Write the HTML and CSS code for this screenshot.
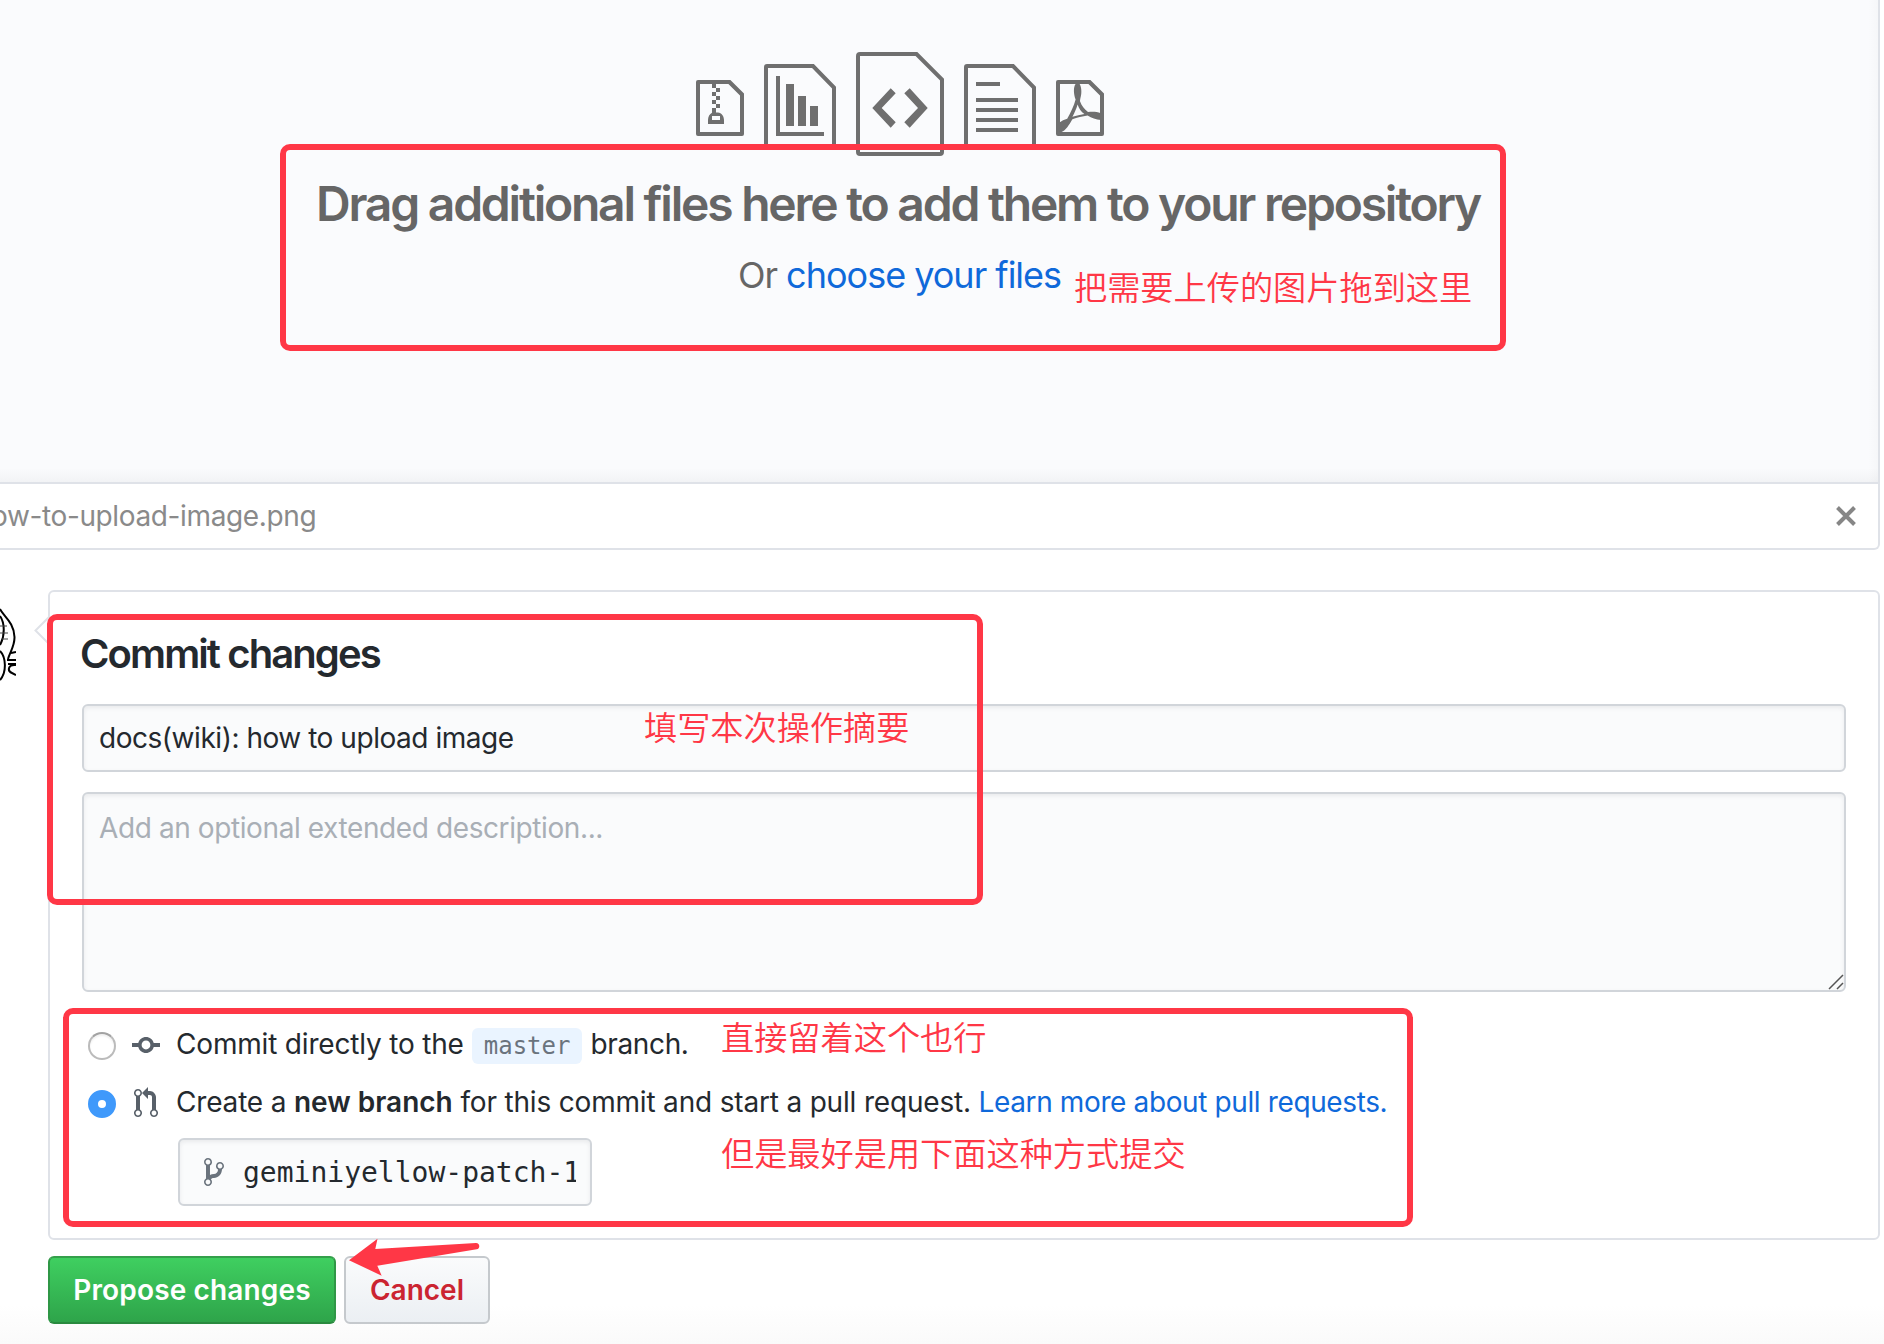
FILE: index.html
```html
<!DOCTYPE html>
<html lang="en">
<head>
<meta charset="utf-8">
<title>Upload files</title>
<link rel="stylesheet" href="styles.css">
</head>
<body>
<main class="page">
  <section class="uploader">
    <div class="dropzone">
      <div class="file-icons">
        <svg class="ic-small" viewBox="0 0 12 14"><path fill-rule="evenodd" d="M8.6 0H.5a.5.5 0 0 0-.5.5v13a.5.5 0 0 0 .5.5h11a.5.5 0 0 0 .5-.5V3.4L8.6 0zM11 13H1V1h3v1h1V1h3.1L11 3.9V13zM5 2h1v1H5zM4 3h1v1H4zM5 4h1v1H5zM4 5h1v1H4zM5 6h1v1H5zM4 7h1v1.1h.5C6.4 8.2 7 9 7 10v1H3v-1c0-.8.4-1.500 1-1.800zM4 9v1h2V9z"/></svg>
        <svg class="ic-medium" viewBox="0 0 72 84"><path class="outline" d="M3 2H49L70 23.500V81a1 1 0 0 1-1 1H3a1 1 0 0 1-1-1V3a1 1 0 0 1 1-1z"/><path d="M12 12h4v56h44v4H12zM22 20h8v42h-8zM34 32h8v30h-8zM46 42h8v20h-8z"/></svg>
        <svg class="ic-large" viewBox="0 0 88 104"><path class="outline" d="M4 2H60.500L86 27.500V100a2 2 0 0 1-2 2H4a2 2 0 0 1-2-2V4a2 2 0 0 1 2-2z"/><path d="M34.700 36.300l5 5L25.700 56l14 14.300-5 5.400L16.300 56zM53.700 36.300l-5.400 5L62 56 48.300 70.300l5.400 5.400L71.700 56z"/></svg>
        <svg class="ic-medium" viewBox="0 0 72 84"><path class="outline" d="M3 2H49L70 23.500V81a1 1 0 0 1-1 1H3a1 1 0 0 1-1-1V3a1 1 0 0 1 1-1z"/><path d="M12 18h24v4H12zM12 34h42v4H12zM12 44h42v4H12zM12 54h42v4H12zM12 64h42v4H12z"/></svg>
        <svg class="ic-small" viewBox="0 0 12 14"><path fill-rule="evenodd" d="M8.600 0H.5a.5.5 0 0 0-.5.5v13a.5.5 0 0 0 .5.5h11a.5.5 0 0 0 .5-.5V3.400zM1 1h7.100L11 3.900V13H1z"/><path fill-rule="evenodd" d="M4.900 1h1C6.300 1.500 6.500 3 6.200 4.100c-.1.500-.2.800-.2 1.200.4 1.100 1.100 2 2 2.700 1.100-.1 2.200-.1 3.200.3v1.700c-1.200-.1-2.300-.500-3.300-1.100-1.300.2-2.600.5-3.800.9C3.300 11.200 2.400 12.600 1.400 13H.8v-2.300c.600-.5 1.300-.8 2-1C3.700 8.100 4.500 6.500 4.900 4.900 4.400 3.500 4.300 1.800 4.900 1zM5.400 6.100C5.100 7.200 4.600 8.200 4.100 9.200c1-.3 2-.5 3-.7C6.300 7.900 5.700 7.100 5.400 6.100z"/></svg>
      </div>
      <h1 class="drop-title">Drag additional files here to add them to your repository</h1>
      <p class="drop-sub">Or <a>choose your files</a></p>
    </div>
    <div class="file-row">
      <span class="file-name">ow-to-upload-image.png</span>
      <svg class="close" viewBox="0 0 20 20"><path d="M1.500 1.500l17 17M18.500 1.500l-17 17"/></svg>
    </div>
  </section>

  <section class="commit">
    <div class="avatar">
      <svg viewBox="0 0 16 92"><g fill="none" stroke="#000" stroke-width="2"><path d="M0 19C3 26 14 32 14.500 47C14.800 56 10 62 8 69"/><path d="M0 26C5 33 5 46 0 55"/><path d="M0 61C6 67 7 82 0 90"/><path d="M7 70h9M8 74h8M11 63l5-1M16 75c-8-1-9 6-4 8l4 2"/></g><path fill="none" stroke="#444" d="M0 36h7M0 43h8M2 49h6"/></svg>
    </div>
    <div class="card">
      <svg class="tail" viewBox="0 0 16 28"><path d="M15 1L1.500 14.500 15 28"/></svg>
      <h2 class="card-title">Commit changes</h2>
      <input class="field summary" type="text" value="docs(wiki): how to upload image">
      <div class="desc">
        <textarea class="field" placeholder="Add an optional extended description..."></textarea>
        <svg class="grip" viewBox="0 0 16 16"><path d="M1 15L15 1M9 15l6-6"/></svg>
      </div>
      <div class="choice">
        <span class="radio"></span>
        <svg class="oct" viewBox="0 0 14 16"><path d="M10.860 7c-.45-1.720-2-3-3.860-3-1.860 0-3.410 1.280-3.860 3H0v2h3.140c.45 1.720 2 3 3.860 3 1.860 0 3.410-1.280 3.860-3H14V7h-3.140zM7 10.200c-1.220 0-2.200-.98-2.200-2.200 0-1.220.98-2.200 2.200-2.200 1.220 0 2.200.98 2.200 2.200 0 1.220-.98 2.200-2.200 2.200z"/></svg>
        <span class="label">Commit directly to the</span>
        <code class="ref">master</code>
        <span class="label tight">branch.</span>
      </div>
      <div class="choice second">
        <span class="radio on"></span>
        <svg class="oct pr" viewBox="0 0 12 16"><path d="M11 11.280V5c-.03-.78-.34-1.470-.94-2.060C9.460 2.350 8.780 2.030 8 2H7V0L4 3l3 3V4h1c.27.020.48.110.69.310.21.200.300.420.310.690v6.280A1.993 1.993 0 0 0 10 15a1.993 1.993 0 0 0 1-3.720zm-1 2.920c-.66 0-1.200-.55-1.200-1.200 0-.65.55-1.200 1.200-1.200.65 0 1.200.55 1.200 1.200 0 .65-.55 1.200-1.200 1.200zM4 3c0-1.110-.89-2-2-2a1.993 1.993 0 0 0-1 3.720v6.560A1.993 1.993 0 0 0 2 15a1.993 1.993 0 0 0 1-3.720V4.720c.59-.34 1-.98 1-1.720zm-.8 10c0 .66-.55 1.200-1.200 1.200-.65 0-1.200-.55-1.200-1.200 0-.65.55-1.200 1.200-1.200.65 0 1.200.55 1.200 1.200zM2 4.200C1.340 4.200.8 3.650.8 3c0-.65.55-1.200 1.200-1.200.65 0 1.200.55 1.200 1.200 0 .65-.55 1.200-1.200 1.200z"/></svg>
        <span class="label">Create a <b>new branch</b> for this commit and start a pull request. <a>Learn more about pull requests.</a></span>
      </div>
      <div class="branch-field">
        <svg class="oct fork" viewBox="0 0 10 16"><path d="M10 5c0-1.110-.89-2-2-2a1.993 1.993 0 0 0-1 3.720v.3c-.02.52-.23.98-.63 1.380-.4.400-.860.610-1.380.630-.83.020-1.480.160-2 .450V4.720a1.993 1.993 0 0 0-1-3.720C.88 1 0 1.890 0 3a2 2 0 0 0 1 1.720v6.560c-.59.350-1 .990-1 1.720 0 1.110.89 2 2 2 1.110 0 2-.89 2-2 0-.53-.2-1-.53-1.360.09-.06.48-.41.590-.470.250-.110.560-.170.940-.170 1.050-.05 1.950-.45 2.750-1.250S8.950 7.770 9 6.730h-.02C9.590 6.370 10 5.730 10 5zM2 1.800c.66 0 1.200.55 1.200 1.200 0 .65-.55 1.200-1.200 1.200C1.350 4.200.8 3.650.8 3c0-.65.55-1.200 1.200-1.200zm0 12.410c-.66 0-1.200-.55-1.200-1.200 0-.65.55-1.200 1.200-1.200.65 0 1.200.55 1.200 1.200 0 .65-.55 1.200-1.200 1.200zm6-8c-.66 0-1.200-.55-1.200-1.200 0-.65.55-1.200 1.200-1.200.65 0 1.200.55 1.200 1.200 0 .65-.55 1.200-1.200 1.200z"/></svg>
        <span class="branch-name">geminiyellow-patch-1</span>
      </div>
    </div>
  </section>

  <div class="actions">
    <button class="btn primary">Propose changes</button>
    <button class="btn danger">Cancel</button>
  </div>

  <div class="mark box-drop"></div>
  <div class="mark box-summary"></div>
  <div class="mark box-branch"></div>
  <span class="note note-drop">把需要上传的图片拖到这里</span>
  <span class="note note-summary">填写本次操作摘要</span>
  <span class="note note-direct">直接留着这个也行</span>
  <span class="note note-branch">但是最好是用下面这种方式提交</span>
  <svg class="arrow" viewBox="0 0 132 38"><path d="M0 22.300L28.500.7 26.300 11 127 5c4 0 4.500 5.500.7 6.300L28.300 27.700l4.400 10z"/></svg>
</main>
</body>
</html>
```
FILE: styles.css
```css
* { box-sizing: border-box; }
body {
  margin: 0;
  background: #fff;
  color: #24292e;
  font: 28px/42px Inter, "Noto Sans", sans-serif;
}
a { color: #0f69da; }
h1, h2, p { margin: 0; }
svg { display: block; flex: none; }

.page {
  position: relative;
  width: 1884px;
  height: 1344px;
  overflow: hidden;
  background: linear-gradient(#fff 1305px, #fafafa 1344px);
}
.uploader {
  width: 1880px;
  height: 550px;
  border: solid #dfe2e8;
  border-width: 0 2px 2px 0;
  border-radius: 0 0 6px 0;
}
.dropzone {
  height: 484px;
  padding: 52px 78px 0 0;
  border-bottom: 2px solid #dfe2e8;
  background:
    linear-gradient(to top, rgba(27, 31, 35, .035), transparent 14px),
    linear-gradient(to left, rgba(27, 31, 35, .02), transparent 10px),
    #fafbfd;
  text-align: center;
}
.file-icons {
  display: flex;
  align-items: center;
  justify-content: center;
  gap: 20px;
  height: 112px;
  padding: 0 0 8px;
}
.file-icons svg { fill: #6f6f6f; }
.file-icons .outline { fill: none; stroke: #6f6f6f; stroke-width: 4; }
.ic-small { width: 48px; height: 56px; margin-top: 8px; }
.ic-medium { width: 72px; height: 84px; margin-top: 4px; }
.ic-large { width: 88px; height: 104px; }
.drop-title {
  margin: 10px 4px 0 0;
  color: #666;
  font-size: 48px;
  line-height: 60px;
  font-weight: 600;
  letter-spacing: -2.23px;
  white-space: nowrap;
}
.drop-sub {
  margin: 14px 1px 0 0;
  color: #666;
  font-size: 36px;
  line-height: 54px;
  letter-spacing: -1px;
}
.file-row {
  display: flex;
  align-items: center;
  justify-content: space-between;
  height: 64px;
  padding: 0 22px 0 0;
}
.file-name { margin-left: -9px; color: #8a8a8a; letter-spacing: -.37px; }
.close { width: 20px; height: 20px; fill: none; stroke: #868686; stroke-width: 4; }

.commit { display: flex; margin-top: 40px; }
.avatar { width: 16px; height: 92px; margin-right: 32px; }
.avatar svg { width: 16px; height: 92px; }
.card {
  position: relative;
  width: 1832px;
  height: 650px;
  padding: 38px 32px 0;
  border: 2px solid #dfe2e8;
  border-radius: 6px;
}
.tail {
  position: absolute;
  left: -16px;
  top: 24px;
  width: 16px;
  height: 28px;
  fill: #fff;
  stroke: #dfe2e8;
  stroke-width: 2;
}
.card-title {
  margin-left: -2px;
  font-size: 40px;
  line-height: 48px;
  font-weight: 600;
  letter-spacing: -1.9px;
}
.field {
  display: block;
  width: 1764px;
  padding: 0 15px;
  border: 2px solid #d1d5da;
  border-radius: 6px;
  background: #fafbfc;
  box-shadow: inset 0 2px 4px rgba(27, 31, 35, .075);
  color: #24292e;
  font: inherit;
  letter-spacing: -.46px;
  outline: none;
}
.summary { height: 68px; margin-top: 26px; }
.desc { position: relative; margin-top: 20px; }
.desc .field { height: 200px; padding-top: 13px; letter-spacing: -.4px; resize: none; }
.field::placeholder { color: #a9afb6; opacity: 1; }
.grip {
  position: absolute;
  right: 2px;
  bottom: 2px;
  width: 16px;
  height: 16px;
  stroke: #555;
  stroke-width: 1.5;
}
.choice {
  display: flex;
  align-items: center;
  height: 42px;
  margin-top: 32px;
  padding-left: 6px;
  white-space: nowrap;
}
.choice.second { margin-top: 16px; }
.radio {
  width: 28px;
  height: 28px;
  margin: 2px 16px 0 0;
  border: 2px solid #bbb;
  border-top-color: #a2a2a2;
  border-radius: 50%;
  box-shadow: inset 0 2px 2px rgba(0, 0, 0, .06);
}
.radio.on {
  border: 10px solid #3f99fb;
  background: #fff;
  box-shadow: none;
}
.oct { width: 28px; height: 32px; fill: #586069; }
.label { margin: -2px 0 0 16px; letter-spacing: -.18px; }
.label.tight { margin-left: 0; letter-spacing: -.35px; }
.label b { font-weight: 600; letter-spacing: 0; }
.label a { letter-spacing: -.38px; }
.ref {
  margin: 2px 8px 0 8px;
  padding: 0 12px;
  border-radius: 6px;
  background: #eaf4ff;
  color: #6a737d;
  font: 24px/36px "DejaVu Sans Mono", monospace;
}
.pr { width: 24px; margin: 0 2px; }
.branch-field {
  display: flex;
  align-items: center;
  width: 414px;
  height: 68px;
  margin: 14px 0 0 96px;
  padding: 0 14px 0 24px;
  border: 2px solid #d1d5da;
  border-radius: 6px;
  background: #fafbfc;
  box-shadow: inset 0 2px 4px rgba(27, 31, 35, .075);
}
.fork { width: 20px; margin-right: 19px; fill: #6a737d; }
.branch-name {
  flex: 1;
  overflow: hidden;
  padding-top: 1px;
  font-family: "DejaVu Sans Mono", monospace;
  white-space: nowrap;
}
.actions { display: flex; gap: 8px; margin: 16px 0 0 48px; }
.btn {
  height: 68px;
  padding: 0;
  border: 2px solid #c5c9cd;
  border-radius: 6px;
  font: 600 28px/42px Inter, "Noto Sans", sans-serif;
}
.primary {
  width: 288px;
  border-color: #34a04b #2f9746 #2a8a3f;
  background: linear-gradient(#3fcf60, #2ea44a);
  color: #fff;
  letter-spacing: .15px;
}
.danger {
  width: 146px;
  background: linear-gradient(#fafbfc, #ebeff3);
  color: #cb2431;
}

/* Annotations drawn over the form */
.mark { position: absolute; border: 6px solid #ff3746; border-radius: 10px; }
.box-drop { left: 280px; top: 144px; width: 1226px; height: 207px; }
.box-summary { left: 47px; top: 614px; width: 936px; height: 291px; }
.box-branch { left: 63px; top: 1008px; width: 1350px; height: 219px; }
.note {
  position: absolute;
  color: #ff3746;
  font: 350 33.2px/40px "Noto Sans CJK SC", sans-serif;
  white-space: nowrap;
}
.note-drop { left: 1074px; top: 266px; }
.note-summary { left: 644px; top: 706px; }
.note-direct { left: 721px; top: 1016px; }
.note-branch { left: 721px; top: 1132px; }
.arrow { position: absolute; left: 349px; top: 1238px; width: 132px; height: 38px; fill: #ff3746; }
```
